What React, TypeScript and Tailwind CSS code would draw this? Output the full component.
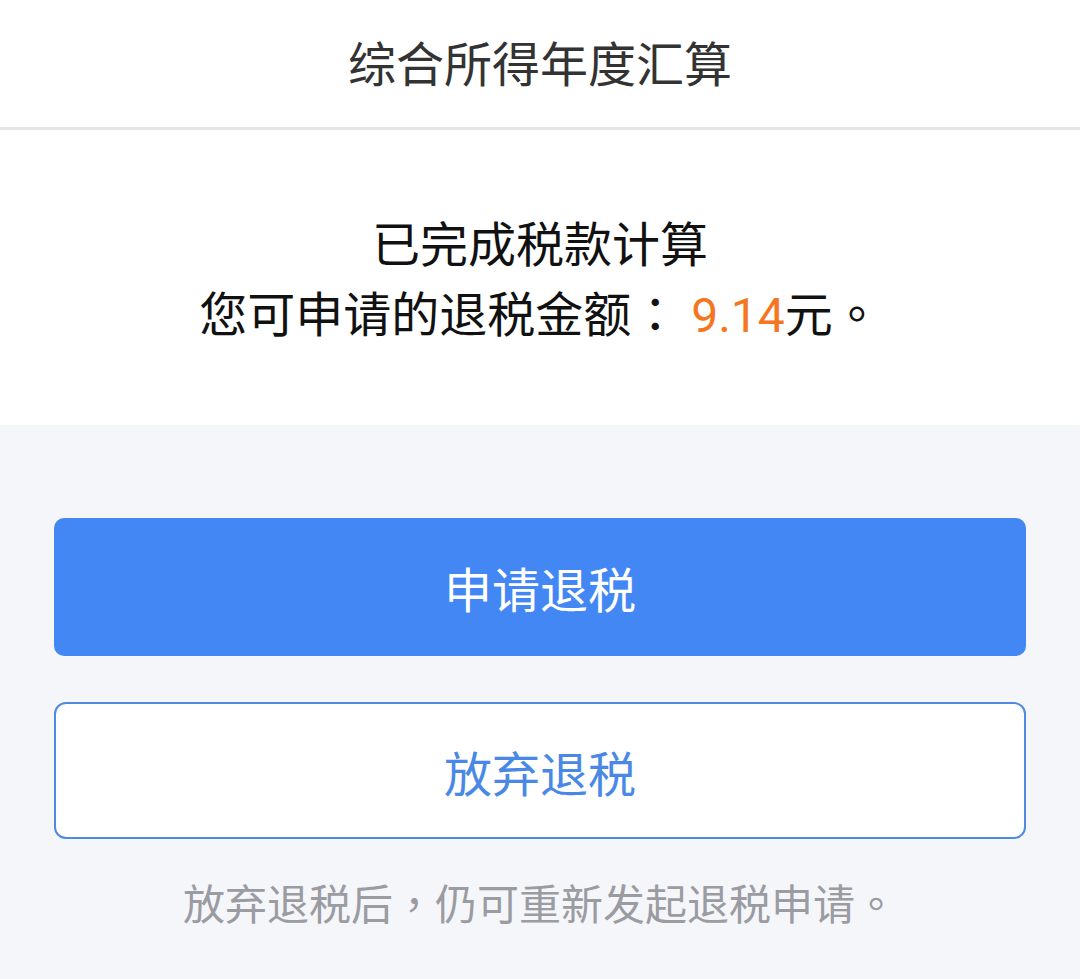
export default function App() {
  return (
    <div className="min-h-[979px] bg-[#f5f6fa] font-['Noto_Sans_CJK_SC','Noto_Sans',sans-serif]">
      <header className="flex h-[130px] items-center justify-center border-b-[3px] border-[#e4e5e7] bg-white pb-[6px]">
        <h1 className="text-[48px] leading-none font-normal text-[#333333]">综合所得年度汇算</h1>
      </header>

      <section className="bg-white pt-[76px] pb-[79px] text-center text-[48px] leading-[70px] text-[#111111]">
        <p className="h-[70px]">已完成税款计算</p>
        <p className="h-[70px]">
          您可申请的退税金额<span className="font-['Noto_Sans_CJK_TC',sans-serif]">：</span>
          <span className="font-['Roboto','Noto_Sans_CJK_SC',sans-serif] text-[#f5761f]"> 9.14</span>
          元<span className="font-['Noto_Sans_CJK_TC',sans-serif]">。</span>
        </p>
      </section>

      <div className="px-[54px] pt-[93px]">
        <button
          type="button"
          className="flex h-[138px] w-full items-center justify-center rounded-[10px] bg-[#4387f5] text-[48px] text-white"
        >
          申请退税
        </button>
        <button
          type="button"
          className="mt-[46px] flex h-[137px] w-full items-center justify-center rounded-[12px] border-2 border-[#4e89e2] bg-white text-[48px] text-[#4a88e6]"
        >
          放弃退税
        </button>
        <p className="mt-[33px] h-[60px] text-center text-[42px] leading-[60px] text-[#9a9ca2]">
          放弃退税后<span className="font-['Noto_Sans_CJK_TC',sans-serif]">，</span>仍可重新发起退税申请
          <span className="font-['Noto_Sans_CJK_TC',sans-serif]">。</span>
        </p>
      </div>
    </div>
  );
}
